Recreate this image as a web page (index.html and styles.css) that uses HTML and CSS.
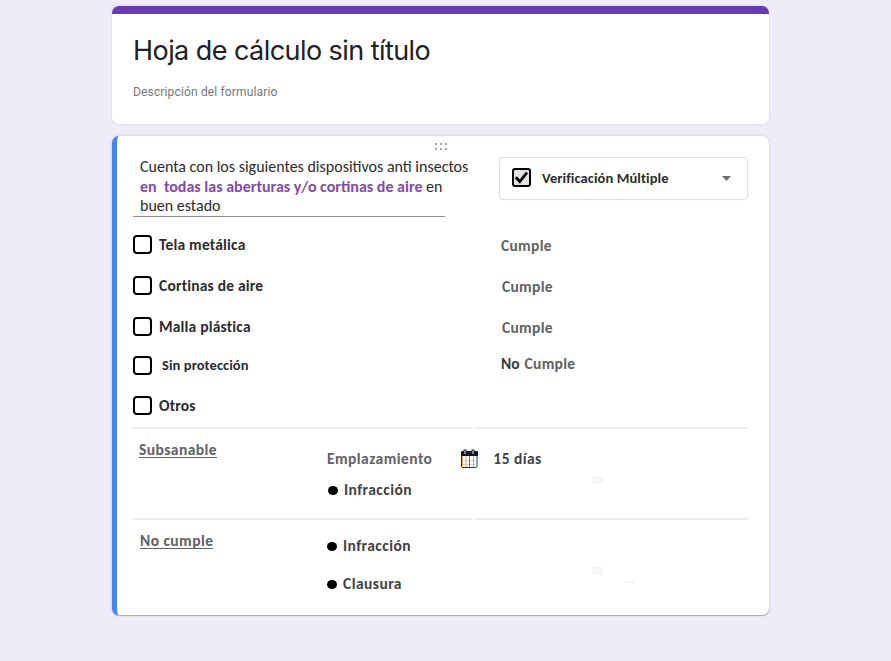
FILE: index.html
```html
<!DOCTYPE html>
<html lang="es">
<head>
<meta charset="utf-8">
<title>Hoja de cálculo sin título</title>
<link rel="stylesheet" href="styles.css">
</head>
<body>
<main class="form">
  <header class="card intro">
    <h1><span class="t-title">Hoja de cálculo sin título</span></h1>
    <p><span class="t-desc">Descripción del formulario</span></p>
  </header>
  <section class="card question">
    <svg class="grip" width="14" height="8" viewBox="0 0 14 8" fill="#a5a7aa"><path d="M1 0h2v2H1zM6 0h2v2H6zM11 0h2v2h-2zM1 5h2v2H1zM6 5h2v2H6zM11 5h2v2h-2z"/></svg>
    <div class="top">
      <div class="prompt">
        <div class="line q1">Cuenta con los siguientes dispositivos anti insectos</div>
        <div class="line q2"><b>en&nbsp; todas las aberturas y/o cortinas de aire</b> en</div>
        <div class="line q3">buen estado</div>
      </div>
      <div class="select">
        <svg width="20" height="20" viewBox="0 0 20 20"><rect x="1" y="1" width="17" height="17" rx="2" fill="#e3e3e3" stroke="#000" stroke-width="2"/><path d="M3.8 9.3l4 4.2L15 4.5" fill="none" stroke="#000" stroke-width="2.8"/></svg>
        <span class="kind">Verificación Múltiple</span>
        <svg class="arrow" width="9" height="5" viewBox="0 0 9 5"><path d="M0 0h9L4.5 5z" fill="#6b6f73"/></svg>
      </div>
    </div>
    <div class="options">
      <div class="option"><i class="box"></i><span>Tela metálica</span></div><div class="result"><span>Cumple</span></div>
      <div class="option"><i class="box"></i><span>Cortinas de aire</span></div><div class="result shifted"><span>Cumple</span></div>
      <div class="option"><i class="box"></i><span>Malla plástica</span></div><div class="result shifted"><span>Cumple</span></div>
      <div class="option"><i class="box"></i><span class="small">Sin protección</span></div><div class="result last"><strong>No</strong><span>Cumple</span></div>
      <div class="option"><i class="box"></i><span>Otros</span></div><div class="result"></div>
    </div>
    <div class="rule"><i></i><i></i></div>
    <div class="outcome">
      <div class="label"><span>Subsanable</span></div>
      <div class="actions">
        <div class="deadline">
          <span class="empl">Emplazamiento</span>
          <svg width="19" height="20" viewBox="0 0 19 20"><rect x="1.5" y="4" width="15.5" height="14.5" rx="1.5" fill="#fff" stroke="#333"/><path d="M1 7V3q0-1 1-1h15q1 0 1 1v4z" fill="#181818"/><path d="M2 11.5h15M2 15.5h15" stroke="#d5d5d5"/><path d="M2.5 7v11M6 7v11M13.5 7v11" stroke="#d9a765"/><path d="M9.5 7v11" stroke="#5968a8"/><path d="M17.3 7v10" stroke="#68aee0" stroke-width="1.4"/><path d="M5 0.5v5M13 0.5v5" stroke="#17204e" stroke-width="3"/><path d="M5 1.5v3.5M13 1.5v3.5" stroke="#f1e7c8"/></svg>
          <span class="days">15 días</span>
        </div>
        <div class="bullet"><i></i><span>Infracción</span></div>
      </div>
      <div class="side"><i class="patch"></i></div>
    </div>
    <div class="rule"><i></i><i></i></div>
    <div class="outcome second">
      <div class="label"><span>No cumple</span></div>
      <div class="actions">
        <div class="bullet"><i></i><span>Infracción</span></div>
        <div class="bullet"><i></i><span>Clausura</span></div>
      </div>
      <div class="side"><i class="patch"></i><i class="dash"></i></div>
    </div>
  </section>
</main>
</body>
</html>
```
FILE: styles.css
```css
* { box-sizing: border-box; }
body { margin: 0; background: #f0ebf8; font-family: Carlito, Lato, "Liberation Sans", sans-serif; color: #2b2b2d; height: 661px; overflow: hidden; }
.form { width: 657px; margin: 6px 0 0 112px; }
.card { background: #fff; border-radius: 7px; box-shadow: 0 0 1px 1px #e3dfeb; }
.intro { height: 118px; border-top: 8px solid #673ab7; padding: 0 21px; }
h1 { margin: 0; padding-top: 19px; font: 400 27px/36px Inter, sans-serif; color: #202124; }
.t-title { letter-spacing: -0.56px; }
.intro p { margin: 15px 0 0; font: 12px/16px Roboto, sans-serif; color: #75787c; letter-spacing: 0.15px; }
.question { margin-top: 12px; height: 479px; padding: 0 21px 0 16px; border-left: 5px solid #4285f4; box-shadow: 0 1px 1px 0 #aaa9b2, 0 0 2px 1px #dedae7; }
.grip { display: block; margin: 0 0 0 301px; position: relative; top: 7px; }
.top { display: flex; justify-content: space-between; height: 81px; padding-top: 13px; }
.prompt { width: 312px; height: 60px; padding-left: 7px; border-bottom: 1px solid #8d8e92; white-space: nowrap; }
.line { font-size: 16px; line-height: 19.5px; }
.prompt b { color: #8549ad; }
.select { width: 249px; height: 43px; border: 1px solid #dfe0e2; border-radius: 4px; display: flex; align-items: center; padding: 0 16px 2px 12px; box-shadow: 0 0 1px #ddd; }
.kind { margin: 1px 0 0 10px; font-weight: 700; font-size: 14.5px; letter-spacing: 0.08px; }
.arrow { margin: 2px 0 0 auto; }
.options { display: grid; grid-template-columns: 368px 1fr; grid-template-rows: 39px 43px 39px 38px 43px; font-size: 15.5px; font-weight: 700; letter-spacing: 0.2px; }
.option, .result { display: flex; align-items: center; }
.box { width: 19px; height: 19px; border: 2px solid #000; border-radius: 4px; margin-right: 7px; }
.small { margin-left: 3px; font-size: 14.5px; letter-spacing: 0.08px; }
.result { color: #606164; padding-top: 2px; letter-spacing: 0.3px; }
.result.shifted { padding-left: 1px; }
.result.last { padding: 0 0 3px; }
.result strong { color: #3b3b3d; margin-right: 5px; letter-spacing: 0; }
.rule { display: flex; gap: 2px; height: 2px; }
.rule i { height: 2px; background: #ededef; flex: 0 0 340px; }
.rule i + i { flex: 1; }
.outcome { display: grid; grid-template-columns: 194px 265px 1fr; height: 89px; font-size: 15.5px; font-weight: 700; color: #606164; line-height: 20px; letter-spacing: 0.45px; }
.label { padding: 11px 0 0 6px; }
.label span { display: inline-block; height: 18px; border-bottom: 1px solid #606164; }
.actions { padding-top: 19px; }
.deadline { display: flex; align-items: center; height: 22px; }
.deadline svg { margin: 0 14px 0 28px; }
.days, .bullet { color: #414144; }
.bullet { display: flex; align-items: center; height: 20px; margin-top: 10px; }
.bullet i { width: 10px; height: 9px; border-radius: 50%; background: #000; margin: 0 6px 0 1px; }
.second .actions { padding-top: 16px; }
.second .bullet { margin: 0 0 18px -1px; }
.second .label { padding-left: 7px; }
.side { padding-top: 47px; }
.patch { display: block; width: 11px; height: 8px; background: #f7f7f7; }
.dash { display: block; width: 9px; height: 2px; margin: 6px 0 0 34px; background: #f5f5f5; }
```
